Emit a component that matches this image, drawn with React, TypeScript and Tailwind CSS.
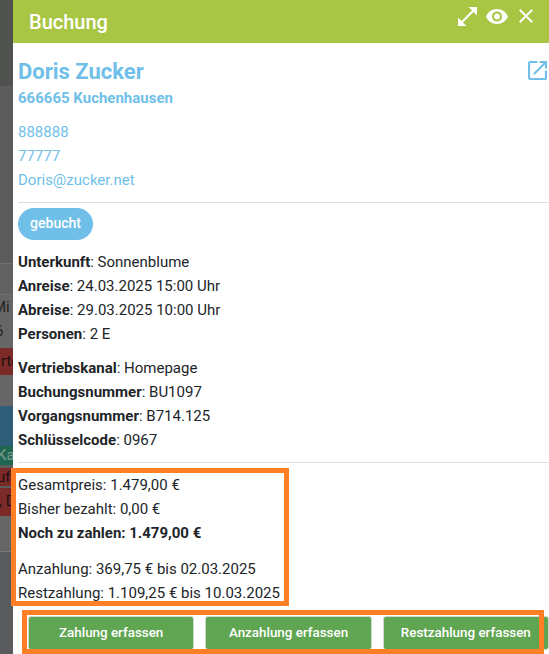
import React from "react";

const Row = ({ k, v }: { k: string; v: string }) => (
  <div className="h-6 leading-6">
    <b className="font-bold">{k}</b>: {v}
  </div>
);

function Strip() {
  return (
    <div className="w-[13px] shrink-0 flex flex-col bg-[#5c5c5c] text-[15px] leading-6 text-[#222] overflow-hidden whitespace-nowrap">
      <div className="h-[86px] shrink-0 bg-[#505250]" />
      <div className="h-[177px] shrink-0 bg-[#5c5c5c]" />
      <div className="h-[32px] shrink-0 bg-[#626262] border-y border-[#707070]" />
      <div className="h-[48px] shrink-0 bg-[#666666]">
        <div className="ml-[-7px]">Mi</div>
        <div className="ml-[-5px]">6</div>
      </div>
      <div className="h-[5px] shrink-0 bg-[#666666]" />
      <div className="h-[27px] shrink-0 bg-[#7c2a28] leading-[27px] text-[#1c1010]">
        <div className="ml-[1px]">rte</div>
      </div>
      <div className="h-[31px] shrink-0 bg-[#666666]" />
      <div className="h-[40px] shrink-0 bg-[#2f5f78]" />
      <div className="h-[19px] shrink-0 bg-[#1f6650] leading-[19px] text-[#7f9f90]">
        <div className="ml-[-3px]">Ka</div>
      </div>
      <div className="h-[3px] shrink-0 bg-[#5c5c5c]" />
      <div className="h-[18px] shrink-0 bg-[#7c2a28] leading-[18px] text-[#1c1010]">
        <div className="ml-[-3px]">uf</div>
      </div>
      <div className="h-[2px] shrink-0 bg-[#5c5c5c]" />
      <div className="h-[28px] shrink-0 bg-[#7c2a28] leading-[26px] text-[#1c1010]">
        <div className="ml-[-1px]">, D</div>
      </div>
      <div className="h-[36px] shrink-0 bg-[#666666] border-b border-[#777]" />
      <div className="flex-1 bg-[#585a5c]" />
    </div>
  );
}

const btn =
  "flex-1 min-w-0 h-[34px] rounded-[3px] border border-[#cfd8cc] bg-[#60a552] text-white text-[13.4px] font-medium";

export default function App() {
  return (
    <div className="relative flex w-[549px] h-[654px] overflow-hidden bg-white text-[15px] text-[#212529] font-['Roboto',sans-serif]">
      <Strip />
      <div className="flex-1 min-w-0 flex flex-col bg-white">
        <header className="h-[43px] shrink-0 bg-[#a9c544] flex items-center justify-between pl-4 pr-4 text-white">
          <span className="text-[20px] font-medium">Buchung</span>
          <div className="flex items-center mt-[-11px]">
            <svg width="19" height="19" viewBox="3 3 18 18" fill="white">
              <path d="M21 11V3h-8l3.290 3.290-10 10L3 13v8h8l-3.290-3.290 10-10z" />
            </svg>
            <svg className="ml-[9px]" width="22" height="15" viewBox="1 4.500 22 15" fill="white">
              <path d="M12 4.500C7 4.500 2.730 7.610 1 12c1.730 4.390 6 7.500 11 7.500s9.270-3.110 11-7.500c-1.730-4.390-6-7.500-11-7.500zM12 17c-2.760 0-5-2.240-5-5s2.240-5 5-5 5 2.240 5 5-2.240 5-5 5zm0-8c-1.660 0-3 1.340-3 3s1.340 3 3 3 3-1.340 3-3-1.340-3-3-3z" />
            </svg>
            <svg className="ml-[11px]" width="14" height="14" viewBox="5 5 14 14" fill="white">
              <path d="M19 6.410L17.590 5 12 10.590 6.410 5 5 6.410 10.590 12 5 17.590 6.410 19 12 13.410 17.590 19 19 17.590 13.410 12z" />
            </svg>
          </div>
        </header>

        <section className="pl-[5px] pr-[2px] pt-[15px]">
          <div className="flex justify-between items-start">
            <div className="text-[#6fbfe8]">
              <div className="text-[22px] font-bold leading-[28px]">Doris Zucker</div>
              <div className="text-[15px] font-bold leading-[24px]">666665 Kuchenhausen</div>
            </div>
            <svg className="mt-[3px]" width="19" height="19" viewBox="3 3 18 18" fill="#6fbfe8">
              <path d="M19 19H5V5h7V3H5a2 2 0 0 0-2 2v14a2 2 0 0 0 2 2h14c1.100 0 2-.900 2-2v-7h-2v7zM14 3v2h3.590l-9.830 9.830 1.410 1.410L19 6.410V10h2V3h-7z" />
            </svg>
          </div>
          <div className="mt-[10px] text-[#6fbfe8] leading-6">
            <div>888888</div>
            <div>77777</div>
            <div>Doris@zucker.net</div>
          </div>
        </section>

        <hr className="ml-[5px] mt-[10px] border-t border-[#dedede]" />

        <section className="px-[5px] pt-[5px]">
          <span className="inline-flex items-center justify-center h-[32px] w-[75px] pb-[2px] rounded-full bg-[#6fbfe8] text-white font-medium text-[14px]">
            gebucht
          </span>
          <div className="mt-[10px]">
            <Row k="Unterkunft" v="Sonnenblume" />
            <Row k="Anreise" v="24.03.2025 15:00 Uhr" />
            <Row k="Abreise" v="29.03.2025 10:00 Uhr" />
            <Row k="Personen" v="2 E" />
          </div>
          <div className="mt-[10px]">
            <Row k="Vertriebskanal" v="Homepage" />
            <Row k="Buchungsnummer" v="BU1097" />
            <Row k="Vorgangsnummer" v="B714.125" />
            <Row k="Schlüsselcode" v="0967" />
          </div>
        </section>

        <hr className="ml-[5px] mt-[10px] border-t border-[#dedede]" />

        <div className="ml-[-2px] mt-[5px] w-[278px] h-[138px] shrink-0 border-[5px] border-[#ff7f27] pl-[2px] leading-6">
          <div>Gesamtpreis: 1.479,00 €</div>
          <div>Bisher bezahlt: 0,00 €</div>
          <div className="font-bold">Noch zu zahlen: 1.479,00 €</div>
          <div className="mt-[12px]">Anzahlung: 369,75 € bis 02.03.2025</div>
          <div>Restzahlung: 1.109,25 € bis 10.03.2025</div>
        </div>

        <div className="relative ml-[9px] mt-[4px] h-[44px] shrink-0 pl-[6px] pt-[6px] flex gap-[11px]">
          <button className={btn}>Zahlung erfassen</button>
          <button className={btn}>Anzahlung erfassen</button>
          <button className={btn}>Restzahlung erfassen</button>
          <div className="absolute left-0 top-0 w-[522px] h-[44px] border-[5px] border-[#ff7f27]" />
        </div>
      </div>
    </div>
  );
}
